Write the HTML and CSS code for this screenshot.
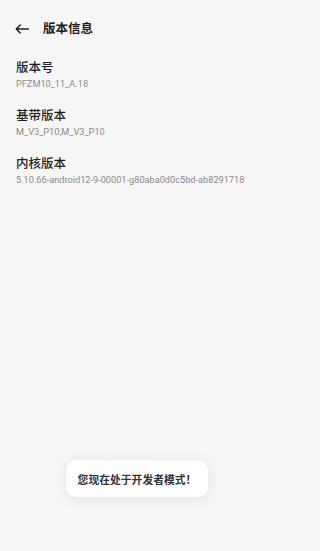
FILE: index.html
```html
<!DOCTYPE html>
<html lang="zh">
<head>
<meta charset="utf-8">
<link rel="stylesheet" href="styles.css">
</head>
<body>
<div class="page">
  <header class="bar">
    <svg class="back" width="14" height="10" viewBox="0 0 14 10"><path d="M13.5 5H1.2M5.2 1L1.2 5l4 4" fill="none" stroke="#1e1e1e" stroke-width="1.4" stroke-linecap="round" stroke-linejoin="round"/></svg>
    <span class="bar-title">版本信息</span>
  </header>
  <ul class="list">
    <li class="item"><div class="label">版本号</div><div class="value">PFZM10_11_A.18</div></li>
    <li class="item"><div class="label">基带版本</div><div class="value">M_V3_P10,M_V3_P10</div></li>
    <li class="item"><div class="label">内核版本</div><div class="value">5.10.66-android12-9-00001-g80aba0d0c5bd-ab8291718</div></li>
  </ul>
  <div class="toast">您现在处于开发者模式！</div>
</div>
</body>
</html>
```

FILE: styles.css
```css
html, body {
  margin: 0;
  padding: 0;
  background: #f6f6f6;
}
.page {
  position: relative;
  width: 270px;
  height: 551px;
  font-family: Roboto, "Noto Sans CJK SC", sans-serif;
  color: #1e1e1e;
}
.bar {
  display: flex;
  align-items: center;
  height: 18px;
  padding: 20px 0 0 15px;
}
.back {
  display: block;
}
.bar-title {
  margin-left: 14px;
  font-size: 12.5px;
  font-weight: 700;
  line-height: 18px;
}
.list {
  list-style: none;
  margin: 0;
  padding: 22px 0 0 16px;
  display: flex;
  flex-direction: column;
  gap: 18px;
}
.label {
  font-size: 12.5px;
  line-height: 16px;
  font-weight: 500;
}
.value {
  margin-top: 2px;
  font-size: 9.2px;
  line-height: 12px;
  color: #8a8a8a;
}
.toast {
  position: absolute;
  left: 66px;
  top: 460px;
  width: 142px;
  height: 37px;
  display: flex;
  align-items: center;
  justify-content: center;
  background: #fff;
  border-radius: 10px;
  box-shadow: 0 2px 14px rgba(0,0,0,0.08);
  font-size: 10.8px;
  font-weight: 700;
  color: #333;
}
```
